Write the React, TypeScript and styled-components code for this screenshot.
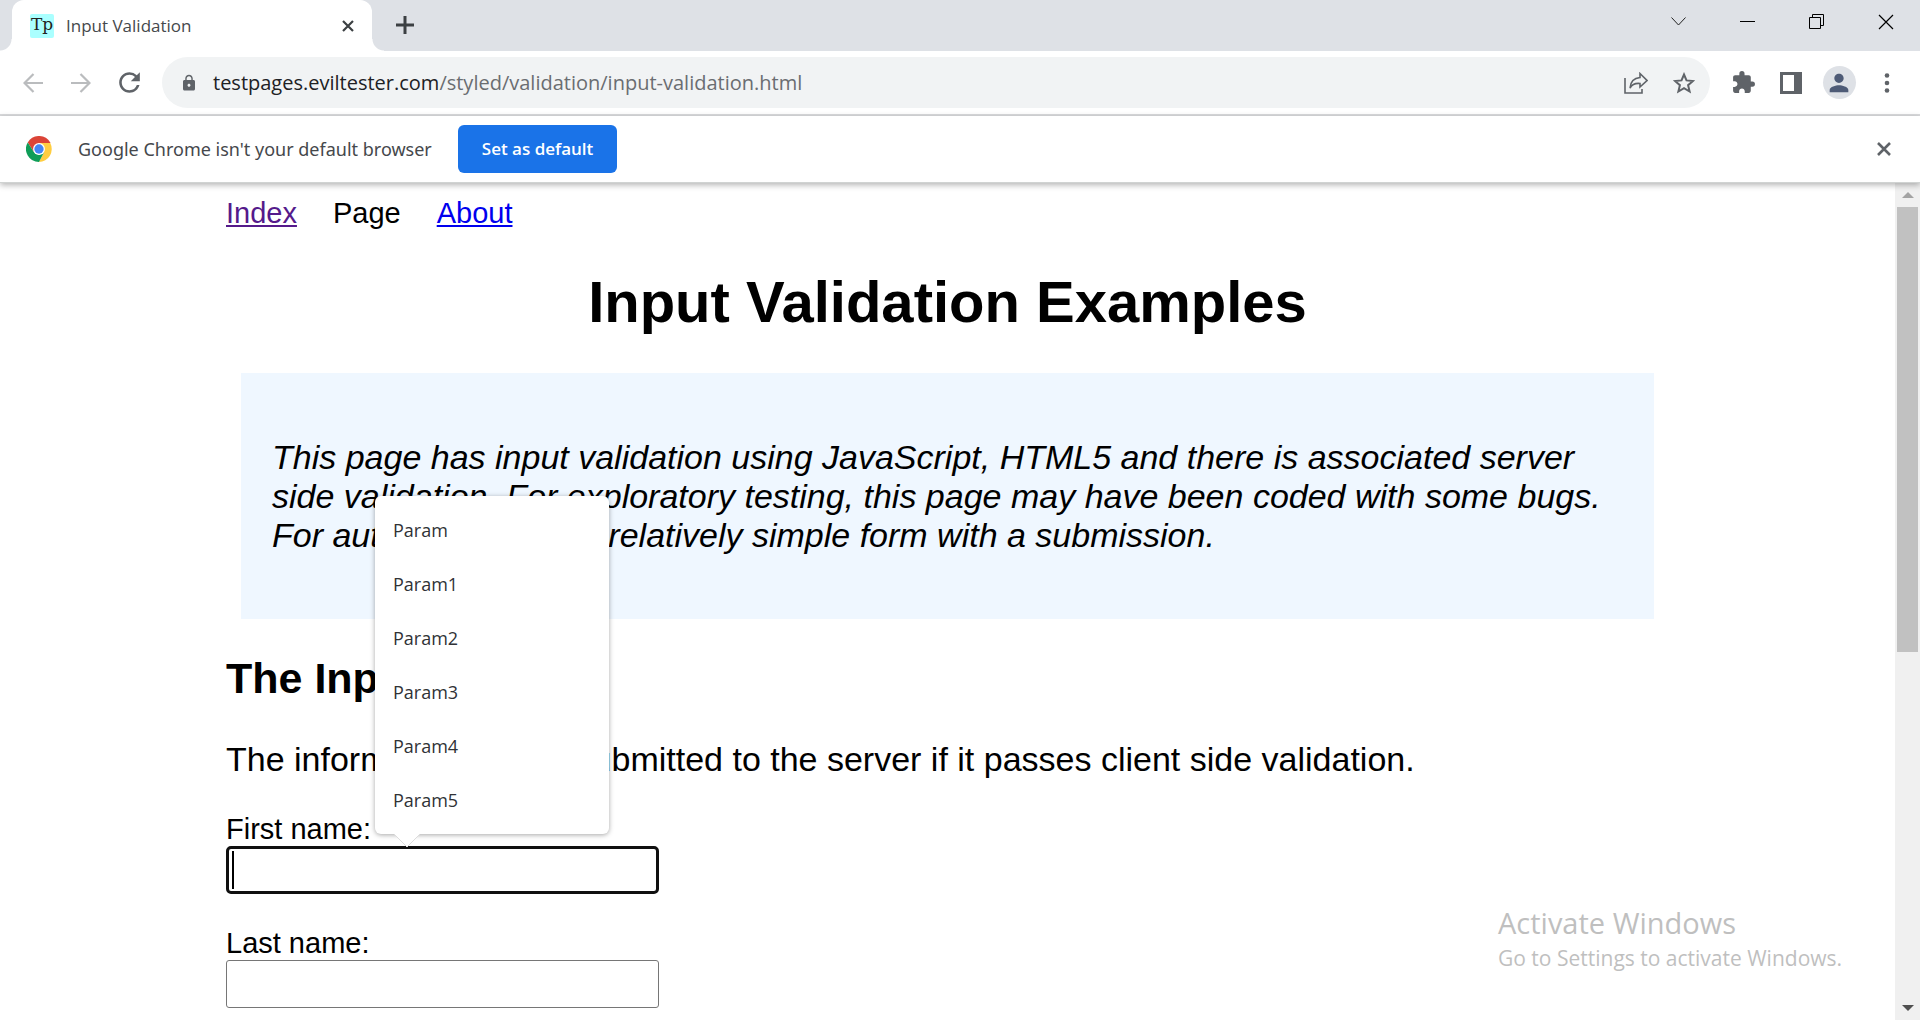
import React from "react";
import styled, { createGlobalStyle } from "styled-components";
import { MdExtension, MdLock, MdPerson, MdRefresh } from "react-icons/md";

const uiFont = `"Segoe UI", "Open Sans", "Noto Sans", sans-serif`;
const pageFont = `Arial, "Liberation Sans", sans-serif`;

const GlobalStyle = createGlobalStyle`
  *, *::before, *::after { box-sizing: border-box; }
  body { margin: 0; background: #fff; color: #000; font-family: ${pageFont}; }
  button { font: inherit; color: inherit; border: 0; padding: 0; background: none; cursor: pointer; }
  h1, h2, p, ul { margin: 0; padding: 0; }
  svg { display: block; flex: none; }
`;

const Browser = styled.div`
  position: relative;
  display: flex;
  flex-direction: column;
  height: 100vh;
  overflow: hidden;
`;

/* ---------- tab strip ---------- */

const TabStrip = styled.header`
  display: flex;
  flex: none;
  height: 51px;
  padding-left: 12px;
  background: #dee1e6;
  font-family: ${uiFont};
`;

const Tab = styled.div`
  position: relative;
  display: flex;
  align-items: center;
  width: 360px;
  padding: 0 18px;
  border-radius: 12px 12px 0 0;
  background: #fff;

  &::before,
  &::after {
    content: "";
    position: absolute;
    bottom: 0;
    width: 12px;
    height: 12px;
  }
  &::before {
    right: 100%;
    background: radial-gradient(circle at 0 0, transparent 11px, #fff 12px);
  }
  &::after {
    left: 100%;
    background: radial-gradient(circle at 100% 0, transparent 11px, #fff 12px);
  }
`;

const Favicon = styled.span`
  width: 24px;
  height: 24px;
  border-radius: 2px;
  background: #aff;
  color: #222;
  font: 17px/21px "DejaVu Serif", serif;
  text-align: center;
`;

const TabTitle = styled.span`
  flex: 1;
  margin-left: 12px;
  color: #45484c;
  font-size: 17px;
  line-height: 24px;
`;

const CloseTab = styled.button`
  color: #3c4043;
`;

const NewTab = styled.button`
  display: grid;
  place-items: center;
  width: 42px;
  height: 42px;
  margin: 4px 0 0 12px;
`;

const WindowControls = styled.div`
  display: flex;
  height: 43px;
  margin-left: auto;
`;

const WindowButton = styled.button`
  display: grid;
  place-items: center;
  width: 69px;
`;

/* ---------- toolbar ---------- */

const Toolbar = styled.div`
  display: flex;
  flex: none;
  align-items: center;
  height: 65px;
  padding: 0 9px;
  border-bottom: 2px solid #dadbdd;
  background: #fff;
  color: #5f6368;
`;

const ToolButton = styled.button<{ $faded?: boolean }>`
  display: grid;
  place-items: center;
  width: 48px;
  height: 48px;
  color: ${(p) => (p.$faded ? "#babcbe" : "#5f6368")};
`;

const Omnibox = styled.div`
  display: flex;
  flex: 1;
  align-items: center;
  height: 51px;
  margin: 0 9px;
  padding: 0 2px 0 18px;
  border-radius: 26px;
  background: #f1f3f4;
`;

const Address = styled.div`
  flex: 1;
  margin-left: 15px;
  color: #6a6d71;
  font: 20px/28px ${uiFont};
`;

const Host = styled.span`
  color: #202124;
`;

const Avatar = styled.span`
  display: grid;
  place-items: center;
  width: 33px;
  height: 33px;
  border-radius: 50%;
  background: #dee1e6;
  color: #4e5b76;
`;

/* ---------- info bar ---------- */

const InfoBar = styled.div`
  position: relative;
  z-index: 2;
  display: flex;
  flex: none;
  align-items: center;
  height: 67px;
  padding: 0 12px 0 26px;
  border-bottom: 1px solid #d0d3d2;
  background: #fff;
  box-shadow: 0 2px 6px rgba(0, 0, 0, 0.3);
  color: #45484c;
  font: 18px/26px ${uiFont};
`;

const InfoText = styled.span`
  margin: 0 26px;
  font-family: "Segoe UI", "Noto Sans", sans-serif;
`;

const DefaultButton = styled.button`
  height: 48px;
  padding: 0 24px;
  border-radius: 6px;
  background: #1a73e8;
  color: #fff;
  font-size: 17px;
  font-weight: 600;
`;

const CloseInfo = styled(ToolButton)`
  margin-left: auto;
`;

/* ---------- web page ---------- */

const Viewport = styled.div`
  display: flex;
  flex: 1;
  min-height: 0;
`;

const Scroller = styled.div`
  flex: 1;
  overflow: hidden;
`;

const Content = styled.main`
  max-width: 1443px;
  margin: 0 auto;
  padding-top: 14px;
`;

const Nav = styled.nav`
  display: flex;
  gap: 36px;
  font-size: 29px;
  line-height: 33px;
`;

const NavLink = styled.a<{ $visited?: boolean }>`
  color: ${(p) => (p.$visited ? "#551a8b" : "#0000ee")};
`;

const Title = styled.h1`
  margin: 39px 0 38px;
  font-size: 58px;
  line-height: 66px;
  text-align: center;
`;

const Explanation = styled.div`
  margin: 0 15px;
  padding: 65px 31px 64px;
  background: #eff7ff;
  font-size: 34px;
  font-style: italic;
  line-height: 39px;
`;

const Subtitle = styled.h2`
  margin: 34px 0 37px;
  font-size: 43px;
  line-height: 50px;
`;

const Paragraph = styled.p`
  margin-bottom: 34px;
  font-size: 34px;
  line-height: 39px;
`;

const Field = styled.div`
  margin-bottom: 33px;
  font-size: 29px;
  line-height: 33px;
`;

const FieldLabel = styled.label`
  display: block;
`;

const InputWrap = styled.div`
  position: relative;
  width: 433px;
`;

const TextInput = styled.input<{ $active?: boolean }>`
  display: block;
  width: 100%;
  height: 48px;
  padding: 2px 5px;
  border: ${(p) => (p.$active ? "3px solid #101010" : "1px solid #767676")};
  border-radius: ${(p) => (p.$active ? "5px" : "3px")};
  outline: 0;
  background: #fff;
  font: inherit;
`;

const Caret = styled.span`
  position: absolute;
  top: 5px;
  left: 6px;
  width: 2px;
  height: 38px;
  background: #000;
`;

const Suggestions = styled.ul`
  position: absolute;
  bottom: calc(100% + 12px);
  left: 149px;
  z-index: 1;
  width: 234px;
  padding: 7px 0;
  border-radius: 6px;
  background: #fff;
  box-shadow: 0 1px 5px rgba(0, 0, 0, 0.35);
  list-style: none;
`;

const Suggestion = styled.button`
  width: 100%;
  height: 54px;
  padding: 0 18px;
  color: #303236;
  font: 18px/26px ${uiFont};
  text-align: left;
`;

const Pointer = styled.svg`
  position: absolute;
  top: 100%;
  left: 18px;
`;

/* ---------- scroll bar and watermark ---------- */

const ScrollBar = styled.div`
  display: flex;
  flex-direction: column;
  width: 25px;
  background: #f0f0f0;
`;

const ScrollButton = styled.button`
  display: grid;
  place-items: center;
  flex: none;
  height: 24px;
`;

const ScrollTrack = styled.div`
  flex: 1;
  padding: 0 2px;
`;

const ScrollThumb = styled.div`
  height: 445px;
  background: #c1c1c1;
`;

const Watermark = styled.aside`
  position: absolute;
  right: 79px;
  bottom: 47px;
  width: 343px;
  color: #bfbfbf;
  font: 21px/30px ${uiFont};
  white-space: nowrap;
`;

const WatermarkTitle = styled.div`
  font-size: 29px;
  line-height: 40px;
`;

/* ---------- drawings ---------- */

const ChromeLogo = () => (
  <svg width="26" height="26" viewBox="0 0 48 48" aria-hidden="true">
    <path d="M24 13H44.8A24 24 0 0 1 24 48L33.5 29.5Z" fill="#ffcd40" />
    <path d="M3.2 12A24 24 0 0 1 44.8 12L45.3 13H24L14.5 29.5Z" fill="#db4437" />
    <path d="M3.2 12 14.5 29.5 24 35 33.5 29.5 24 48A24 24 0 0 1 3.2 12Z" fill="#0f9d58" />
    <circle cx="24" cy="24" r="11" fill="#fff" />
    <circle cx="24" cy="24" r="8.6" fill="#4285f4" />
  </svg>
);

const Cross = ({ size, width }: { size: number; width: number }) => (
  <svg width={size} height={size} viewBox={`0 0 ${size} ${size}`} aria-hidden="true">
    <path d={`M1 1 ${size - 1} ${size - 1}M${size - 1} 1 1 ${size - 1}`} stroke="currentColor" strokeWidth={width} />
  </svg>
);

const Arrow = ({ forward }: { forward?: boolean }) => (
  <svg width="20" height="20" viewBox="0 0 20 20" aria-hidden="true">
    <path
      d={forward ? "M0 10H18M9.5 1 18.5 10 9.5 19" : "M20 10H2M10.5 1 1.5 10 10.5 19"}
      fill="none"
      stroke="currentColor"
      strokeWidth="2.2"
    />
  </svg>
);

const ShareIcon = () => (
  <svg width="24" height="22" viewBox="0 0 24 22" fill="none" stroke="currentColor" strokeWidth="1.6" aria-hidden="true">
    <path d="M1 6V21H18V17" />
    <path d="M16 1.5 23 8.5 16 15V11.5C11 11 8 12.5 6 16 6.5 10 10 6 16 5.5Z" />
  </svg>
);

const StarIcon = () => (
  <svg width="22" height="22" viewBox="0 0 22 22" aria-hidden="true">
    <path
      d="M11 2.5 13.5 8.4 20 9 15.1 13.2 16.6 19.5 11 16.1 5.4 19.500 6.900 13.200 2 9 8.500 8.400Z"
      fill="none"
      stroke="currentColor"
      strokeWidth="2"
    />
  </svg>
);

const SidePanelIcon = () => (
  <svg width="22" height="22" viewBox="0 0 22 22" aria-hidden="true">
    <path d="M0 0H22V22H0ZM3 3V19H14V3Z" fill="currentColor" fillRule="evenodd" />
  </svg>
);

const MenuIcon = () => (
  <svg width="6" height="20" viewBox="0 0 6 20" fill="currentColor" aria-hidden="true">
    <circle cx="3" cy="2.5" r="2.3" />
    <circle cx="3" cy="10" r="2.3" />
    <circle cx="3" cy="17.5" r="2.3" />
  </svg>
);

const suggestions = ["Param", "Param1", "Param2", "Param3", "Param4", "Param5"];

export default function App() {
  return (
    <Browser>
      <GlobalStyle />
      <TabStrip>
        <Tab>
          <Favicon>Tp</Favicon>
          <TabTitle>Input Validation</TabTitle>
          <CloseTab aria-label="Close tab">
            <Cross size={12} width={2.2} />
          </CloseTab>
        </Tab>
        <NewTab aria-label="New tab">
          <svg width="18" height="18" viewBox="0 0 18 18" aria-hidden="true">
            <path d="M9 0V18M0 9H18" stroke="#3c4043" strokeWidth="3" />
          </svg>
        </NewTab>
        <WindowControls>
          <WindowButton aria-label="Search tabs">
            <svg width="15" height="9" viewBox="0 0 15 9" aria-hidden="true">
              <path d="M.5.5 7.5 8 14.5.5" fill="none" stroke="#222" />
            </svg>
          </WindowButton>
          <WindowButton aria-label="Minimize">
            <svg width="15" height="1" aria-hidden="true">
              <path d="M0 .5H15" stroke="#000" />
            </svg>
          </WindowButton>
          <WindowButton aria-label="Restore">
            <svg width="15" height="15" viewBox="0 0 15 15" fill="none" stroke="#000" aria-hidden="true">
              <path d="M.5 3.5H11.5V14.5H.5ZM3.5 3.5V.5H14.5V11.5H11.5" />
            </svg>
          </WindowButton>
          <WindowButton aria-label="Close">
            <Cross size={16} width={1.2} />
          </WindowButton>
        </WindowControls>
      </TabStrip>

      <Toolbar>
        <ToolButton $faded aria-label="Back">
          <Arrow />
        </ToolButton>
        <ToolButton $faded aria-label="Forward">
          <Arrow forward />
        </ToolButton>
        <ToolButton aria-label="Reload">
          <MdRefresh size={31} />
        </ToolButton>
        <Omnibox>
          <MdLock size={18} />
          <Address role="textbox" aria-label="Address">
            <Host>testpages.eviltester.com</Host>/styled/validation/input-validation.html
          </Address>
          <ToolButton aria-label="Share">
            <ShareIcon />
          </ToolButton>
          <ToolButton aria-label="Bookmark">
            <StarIcon />
          </ToolButton>
        </Omnibox>
        <ToolButton aria-label="Extensions">
          <MdExtension size={25} />
        </ToolButton>
        <ToolButton aria-label="Side panel">
          <SidePanelIcon />
        </ToolButton>
        <ToolButton aria-label="Profile">
          <Avatar>
            <MdPerson size={28} />
          </Avatar>
        </ToolButton>
        <ToolButton aria-label="Menu">
          <MenuIcon />
        </ToolButton>
      </Toolbar>

      <InfoBar>
        <ChromeLogo />
        <InfoText>Google Chrome isn't your default browser</InfoText>
        <DefaultButton>Set as default</DefaultButton>
        <CloseInfo aria-label="Dismiss">
          <Cross size={14} width={2.6} />
        </CloseInfo>
      </InfoBar>

      <Viewport>
        <Scroller>
          <Content>
            <Nav>
              <NavLink $visited href="#index">Index</NavLink>
              <span>Page</span>
              <NavLink href="#about">About</NavLink>
            </Nav>
            <Title>Input Validation Examples</Title>
            <Explanation>
              <p>
                This page has input validation using JavaScript, HTML5 and there is associated server side
                validation. For exploratory testing, this page may have been coded with some bugs. For
                automating, it is a relatively simple form with a submission.
              </p>
            </Explanation>
            <Subtitle>The Input</Subtitle>
            <Paragraph>
              The information will be submitted to the server if it passes client side validation.
            </Paragraph>
            <Field>
              <FieldLabel htmlFor="firstname">First name:</FieldLabel>
              <InputWrap>
                <TextInput $active id="firstname" autoComplete="off" />
                <Caret />
                <Suggestions>
                  {suggestions.map((name) => (
                    <li key={name}>
                      <Suggestion type="button">{name}</Suggestion>
                    </li>
                  ))}
                  <Pointer width="28" height="13" viewBox="0 0 28 13" aria-hidden="true">
                    <path d="M1 0 14 13 27 0Z" fill="#fff" />
                    <path d="M1 0 14 13 27 0" fill="none" stroke="#ddd" />
                  </Pointer>
                </Suggestions>
              </InputWrap>
            </Field>
            <Field>
              <FieldLabel htmlFor="surname">Last name:</FieldLabel>
              <InputWrap>
                <TextInput id="surname" autoComplete="off" />
              </InputWrap>
            </Field>
          </Content>
        </Scroller>
        <ScrollBar>
          <ScrollButton aria-label="Scroll up">
            <svg width="12" height="6" viewBox="0 0 12 6" aria-hidden="true">
              <path d="M0 6 6 0 12 6Z" fill="#a3a3a3" />
            </svg>
          </ScrollButton>
          <ScrollTrack>
            <ScrollThumb />
          </ScrollTrack>
          <ScrollButton aria-label="Scroll down">
            <svg width="12" height="6" viewBox="0 0 12 6" aria-hidden="true">
              <path d="M0 0 6 6 12 0Z" fill="#505050" />
            </svg>
          </ScrollButton>
        </ScrollBar>
      </Viewport>

      <Watermark>
        <WatermarkTitle>Activate Windows</WatermarkTitle>
        <div>Go to Settings to activate Windows.</div>
      </Watermark>
    </Browser>
  );
}
